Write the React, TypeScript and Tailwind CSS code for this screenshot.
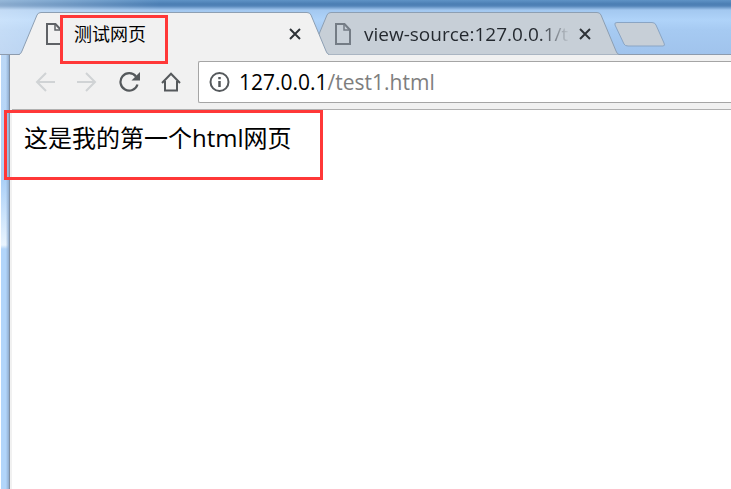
import React from "react";

const uiFont = "font-['Open_Sans','Noto_Sans_CJK_SC',sans-serif]";

function PageIcon() {
  return (
    <svg width="16" height="22" viewBox="0 0 16 22" fill="none" stroke="currentColor" strokeWidth="2" className="shrink-0" aria-hidden="true">
      <path d="M1 1H9.500L15 7V21H1Z" />
      <path d="M9 1V7H15" strokeWidth="1.500" />
    </svg>
  );
}

function CloseIcon() {
  return (
    <svg width="12" height="12" viewBox="0 0 12 12" stroke="currentColor" strokeWidth="2" aria-hidden="true">
      <path d="M1 1L11 11M11 1L1 11" />
    </svg>
  );
}

function Tab({ title, active }: { title: React.ReactNode; active?: boolean }) {
  return (
    <div
      className={
        active
          ? "relative z-10 flex h-[43px] w-[310px] shrink-0 items-center pr-[24px] pl-[27px] text-[#5f6266]"
          : "relative -ml-[20px] flex h-[43px] w-[310px] shrink-0 items-center pr-[24px] pl-[26px] text-[#747c85]"
      }
    >
      <svg viewBox="0 0 310 43" preserveAspectRatio="none" className="absolute inset-0 h-full w-full" aria-hidden="true">
        <path
          d="M0 42.500Q2 42 3 39L18 3Q19 .5 22 .5H288Q291 .5 292 3L307 39Q308 42 310 42.500"
          fill={active ? "#f1f1f1" : "#c7cfd7"}
          stroke="#8d9fb3"
        />
        {active && <path d="M1 42.500H309" stroke="#f1f1f1" />}
      </svg>
      <span className="relative flex min-w-0 flex-1 items-center">
        <PageIcon />
        {title}
        <button type="button" aria-label="Close tab" className="ml-auto flex h-5 w-5 shrink-0 items-center justify-center text-[#2e3338]">
          <CloseIcon />
        </button>
      </span>
    </div>
  );
}

export default function App() {
  return (
    <div className={`relative flex min-h-screen flex-col overflow-hidden bg-[#b2d5fa] ${uiFont}`}>
      <header className="flex h-[55px] items-end bg-[linear-gradient(to_right,rgba(255,255,255,0.35),transparent_160px),linear-gradient(to_bottom,#5f93c6_0,#4b7eb3_4px,#5384b8_6px,#a3c8f0_10px,#afd3f9_20px,#a6caf2_30px,#a0c3ec_55px)] pl-[19px] shadow-[inset_0_-1px_0_#8d9bad]">
        <Tab
          active
          title={<span className="ml-[12px] text-[18px] leading-6 text-black">测试网页</span>}
        />
        <Tab
          title={
            <span className="ml-[13px] w-[206px] bg-linear-to-r from-[#23282e] from-85% to-transparent bg-clip-text text-[19px] leading-6 whitespace-nowrap text-transparent">
              view-source:127.0.0.1/te
            </span>
          }
        />
        <button type="button" aria-label="New tab" className="-ml-[6px] shrink-0 pb-[8px]">
          <svg width="54" height="25" viewBox="0 0 54 25" aria-hidden="true">
            <path d="M4 .5H39Q42 .5 43 3L51 21Q52.500 24 50 24H15Q12 24 11 22L2 3Q1 .5 4 .5Z" fill="#c7cfd7" stroke="#8aa5c4" />
          </svg>
        </button>
      </header>
      <div className="flex flex-1">
        <div className="w-[10px] shrink-0 border-r border-l border-l-white border-r-[#8190a3] bg-[linear-gradient(to_right,transparent_60%,#8fadd0),linear-gradient(to_bottom,#bcd8f6_0,#b4d4f7_90px,#abd0f7_125px,#e9f4fe_190px,#b2d5fa_194px)]" />
        <div className="flex min-w-0 flex-1 flex-col bg-[#f1f1f1]">
          <nav className="flex h-[54px] items-center pl-[25px] text-[#55595c]">
            <button type="button" aria-label="Back" className="mr-[22px] text-[#d0d3d5]">
              <svg width="20" height="20" viewBox="0 0 20 20" fill="none" stroke="currentColor" strokeWidth="2" aria-hidden="true">
                <path d="M20 10H2M11 1L2 10L11 19" />
              </svg>
            </button>
            <button type="button" aria-label="Forward" className="mr-[22px] text-[#d0d3d5]">
              <svg width="20" height="20" viewBox="0 0 20 20" fill="none" stroke="currentColor" strokeWidth="2" aria-hidden="true">
                <path d="M0 10H18M9 1L18 10L9 19" />
              </svg>
            </button>
            <button type="button" aria-label="Reload" className="mr-[21px]">
              <svg width="21" height="20" viewBox="0 0 21 20" fill="none" stroke="currentColor" aria-hidden="true">
                <path d="M17 4.500A8.700 8.700 0 1 0 18.500 12.500" strokeWidth="2.200" />
                <path d="M21 0V8.500H12.500Z" fill="currentColor" stroke="none" />
              </svg>
            </button>
            <button type="button" aria-label="Home" className="mr-[17px]">
              <svg width="20" height="20" viewBox="0 0 20 20" fill="none" stroke="currentColor" strokeWidth="2" aria-hidden="true">
                <path d="M1 11L10 1.800L19 11M4 9V18.500H16V9" />
              </svg>
            </button>
            <div className="flex h-[42px] min-w-0 flex-1 items-center rounded-l-[2px] border border-r-0 border-[#a5a5a5] bg-white pl-[10px]">
              <svg width="21" height="20" viewBox="0 0 20 20" fill="none" stroke="currentColor" strokeWidth="2" className="shrink-0" aria-hidden="true">
                <circle cx="10" cy="10" r="9" />
                <path d="M10 9V15M10 5V7.200" strokeWidth="2.500" />
              </svg>
              <span className="ml-[9px] text-[21px] leading-7 text-[#7e7e7e]">
                <span className="text-black">127.0.0.1</span>/test1.html
              </span>
            </div>
          </nav>
          <main className="ml-[2px] flex-1 border-t border-[#b0b0b0] bg-white px-3 pt-[12px]">
            <p className="text-[24px] leading-8 text-black">这是我的第一个html网页</p>
          </main>
        </div>
      </div>
      <div className="pointer-events-none absolute top-[15px] left-[60px] z-20 h-[49px] w-[108px] border-3 border-[#ff3838]" />
      <div className="pointer-events-none absolute top-[110px] left-[4px] z-20 h-[70px] w-[319px] border-3 border-[#ff3838]" />
    </div>
  );
}
